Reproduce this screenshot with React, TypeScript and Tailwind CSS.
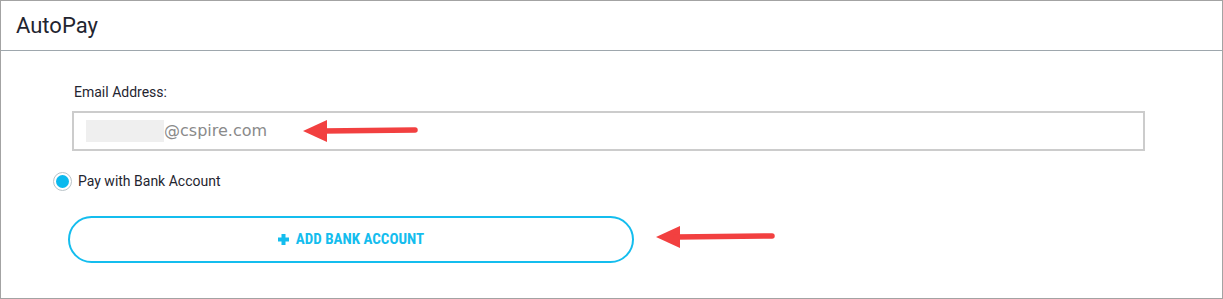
import React from "react";

function Arrow({ width }: { width: number }) {
  return (
    <svg width={width} height="26" viewBox={`0 0 ${width} 26`} className="block">
      <polygon points="0,13 24,2 24,24" fill="#f24040" />
      <line x1="20" y1="13" x2={width - 3} y2="12" stroke="#f24040" strokeWidth="5.5" strokeLinecap="round" />
    </svg>
  );
}

export default function App() {
  return (
    <div className="box-border h-[299px] w-[1223px] border border-[#a3a3a3] bg-white" style={{ fontFamily: "Roboto, sans-serif" }}>
      <div className="flex h-[50px] items-center border-b border-[#9ea7ad] px-[15px]">
        <h1 className="text-[22px] leading-none text-[#1f2530]">AutoPay</h1>
      </div>

      <div className="pl-[71px] pr-[77px] pt-[31px]">
        <label className="block pl-[2px] text-[14px] leading-[20px] text-[#1f2530]">Email Address:</label>
        <div className="relative mt-[9px] flex h-[40px] items-center border-2 border-[#cccccc] pl-[12px]">
          <span className="h-[22px] w-[78px] bg-[#efefef]" />
          <span className="text-[16px] text-[#8a8a8a]" style={{ fontFamily: "'DejaVu Sans', sans-serif" }}>
            @cspire.com
          </span>
          <div className="absolute left-[229px] top-[5px]">
            <Arrow width={115} />
          </div>
        </div>
      </div>

      <div className="ml-[52px] mt-[20px] flex items-center gap-[6px]">
        <span className="flex h-[19px] w-[19px] items-center justify-center rounded-full border border-[#b9c3c8] bg-white">
          <span className="h-[13px] w-[13px] rounded-full bg-[#0ab9ee]" />
        </span>
        <span className="text-[14px] text-[#1f2530]">Pay with Bank Account</span>
      </div>

      <div className="relative ml-[67px] mt-[24px] w-[566px]">
        <button className="flex h-[47px] w-full items-center justify-center gap-[7px] rounded-full border-2 border-[#14bdee] bg-white">
          <svg width="11" height="11" viewBox="0 0 11 11">
            <rect x="3.5" y="0" width="4" height="11" fill="#14bdee" />
            <rect x="0" y="3.5" width="11" height="4" fill="#14bdee" />
          </svg>
          <span
            className="text-[15px] font-bold uppercase text-[#14bdee]"
            style={{ fontFamily: "'Liberation Sans Narrow', 'Roboto Condensed', Roboto, sans-serif" }}
          >
            Add Bank Account
          </span>
        </button>
        <div className="absolute left-[588px] top-[8px]">
          <Arrow width={119} />
        </div>
      </div>
    </div>
  );
}
